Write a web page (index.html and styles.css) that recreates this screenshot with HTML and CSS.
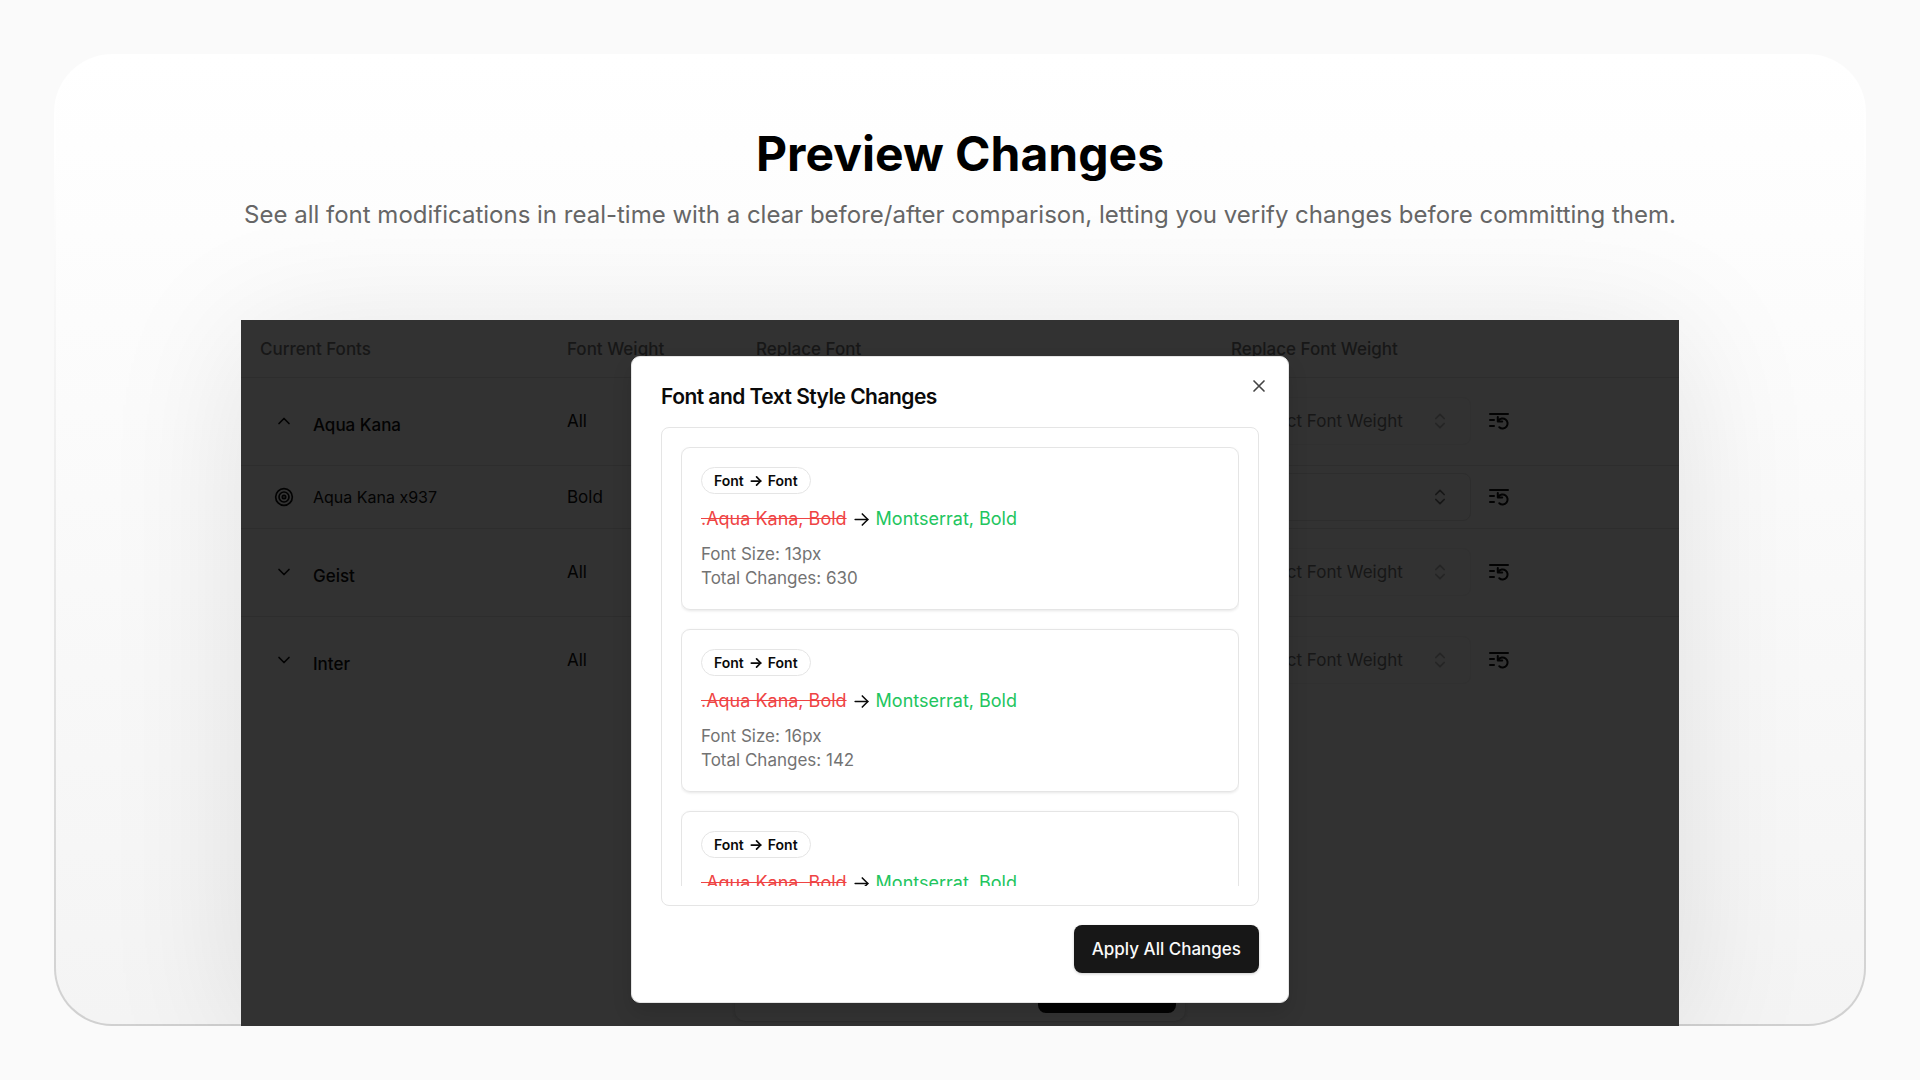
FILE: index.html
```html
<!DOCTYPE html>
<html lang="en">
<head>
<meta charset="utf-8">
<title>Preview Changes</title>
<link rel="stylesheet" href="styles.css">
</head>
<body>
<svg class="sprite" aria-hidden="true">
  <symbol id="chev-up" viewBox="0 0 24 24"><path d="m6 15 6-6 6 6"/></symbol>
  <symbol id="chev-down" viewBox="0 0 24 24"><path d="m6 9 6 6 6-6"/></symbol>
  <symbol id="sort" viewBox="0 0 24 24"><path d="m7 15 5 5 5-5"/><path d="m7 9 5-5 5 5"/></symbol>
  <symbol id="target" viewBox="0 0 24 24"><circle cx="12" cy="12" r="10"/><circle cx="12" cy="12" r="6"/><circle cx="12" cy="12" r="2"/></symbol>
  <symbol id="reset" viewBox="0 0 22 20"><path d="M2 3h18M2 9h4M2 15h4"/><path d="M10.500 9.600a5 5 0 1 1 .8 6.600"/><path d="M9.800 6v4.400h4.400"/></symbol>
  <symbol id="arrow" viewBox="0 0 24 24"><path d="M4 12h16"/><path d="m13 5 7 7-7 7"/></symbol>
  <symbol id="cross" viewBox="0 0 24 24"><path d="M6 6l12 12M18 6 6 18"/></symbol>
</svg>
<main class="card">
  <header class="intro">
    <h1 class="title">Preview Changes</h1>
    <p class="subtitle">See all font modifications in real-time with a clear before/after comparison, letting you verify changes before committing them.</p>
  </header>
  <section class="app">
    <table class="fonts">
      <colgroup><col class="c1"><col class="c2"><col class="c3"><col class="c4"><col></colgroup>
      <thead>
        <tr><th>Current Fonts</th><th>Font Weight</th><th>Replace Font</th><th>Replace Font Weight</th><th></th></tr>
      </thead>
      <tbody>
        <tr class="group">
          <td><div class="name"><svg class="ico"><use href="#chev-up"/></svg><strong>Aqua Kana</strong></div></td><td>All</td><td></td>
          <td><button class="select off" type="button">Select Font Weight<svg class="ico"><use href="#sort"/></svg></button></td>
          <td><button class="undo" type="button" aria-label="Reset"><svg class="reset"><use href="#reset"/></svg></button></td>
        </tr>
        <tr class="item">
          <td><div class="name"><svg class="ico"><use href="#target"/></svg>Aqua Kana x937</div></td><td>Bold</td><td></td>
          <td><button class="select" type="button" aria-label="Font weight"><svg class="ico"><use href="#sort"/></svg></button></td>
          <td><button class="undo" type="button" aria-label="Reset"><svg class="reset"><use href="#reset"/></svg></button></td>
        </tr>
        <tr class="group">
          <td><div class="name"><svg class="ico"><use href="#chev-down"/></svg><strong>Geist</strong></div></td><td>All</td><td></td>
          <td><button class="select off" type="button">Select Font Weight<svg class="ico"><use href="#sort"/></svg></button></td>
          <td><button class="undo" type="button" aria-label="Reset"><svg class="reset"><use href="#reset"/></svg></button></td>
        </tr>
        <tr class="group">
          <td><div class="name"><svg class="ico"><use href="#chev-down"/></svg><strong>Inter</strong></div></td><td>All</td><td></td>
          <td><button class="select off" type="button">Select Font Weight<svg class="ico"><use href="#sort"/></svg></button></td>
          <td><button class="undo" type="button" aria-label="Reset"><svg class="reset"><use href="#reset"/></svg></button></td>
        </tr>
      </tbody>
    </table>
    <div class="toolbar"><span class="toolbar-action"></span></div>
    <div class="dialog" role="dialog" aria-labelledby="dialog-title">
      <div class="dialog-head">
        <h2 class="dialog-title" id="dialog-title">Font and Text Style Changes</h2>
        <button class="close" type="button" aria-label="Close"><svg class="ico"><use href="#cross"/></svg></button>
      </div>
      <div class="scroll">
        <div class="list">
          <article class="change">
            <span class="badge">Font <svg class="arrow-s"><use href="#arrow"/></svg> Font</span>
            <p class="diff"><del>.Aqua Kana, Bold</del><svg class="arrow"><use href="#arrow"/></svg><ins>Montserrat, Bold</ins></p>
            <p class="meta">Font Size: 13px<br>Total Changes: 630</p>
          </article>
          <article class="change">
            <span class="badge">Font <svg class="arrow-s"><use href="#arrow"/></svg> Font</span>
            <p class="diff"><del>.Aqua Kana, Bold</del><svg class="arrow"><use href="#arrow"/></svg><ins>Montserrat, Bold</ins></p>
            <p class="meta">Font Size: 16px<br>Total Changes: 142</p>
          </article>
          <article class="change">
            <span class="badge">Font <svg class="arrow-s"><use href="#arrow"/></svg> Font</span>
            <p class="diff"><del>.Aqua Kana, Bold</del><svg class="arrow"><use href="#arrow"/></svg><ins>Montserrat, Bold</ins></p>
          </article>
        </div>
      </div>
      <button class="apply" type="button">Apply All Changes</button>
    </div>
  </section>
</main>
</body>
</html>
```
FILE: styles.css
```css
* { box-sizing: border-box; }
body {
  margin: 0;
  min-height: 100vh;
  padding: 54px;
  display: flex;
  background: #fafafa;
  font-family: Inter, "Liberation Sans", sans-serif;
  color: #000;
}
h1, h2, p { margin: 0; font-weight: inherit; }
button { font: inherit; color: inherit; background: none; border: 0; padding: 0; }
svg { fill: none; stroke: currentColor; stroke-width: 2; stroke-linecap: round; stroke-linejoin: round; display: block; flex: none; }
.sprite { display: none; }

.card {
  flex: 1;
  min-width: 0;
  display: flex;
  flex-direction: column;
  align-items: center;
  border: 2px solid transparent;
  border-radius: 58px;
  background:
    linear-gradient(#fff, #f4f4f4) padding-box,
    linear-gradient(#fff, #fff 10%, #d0d0d0) border-box;
  overflow: hidden;
  overflow: clip;
  overflow-clip-margin: border-box;
}
.intro { padding: 68px 40px 0; text-align: center; }
.title { font-size: 48px; line-height: 60px; font-weight: 700; }
.subtitle { margin-top: 15px; font-size: 24px; line-height: 32px; color: #666; }

.app {
  position: relative;
  flex: 1;
  width: 79.540%;
  margin: 89px 0 -2px;
  background: #323232;
  box-shadow: 0 16px 130px rgba(0, 0, 0, 0.1);
  font-size: 17px;
}
.fonts { width: 100%; border-collapse: collapse; table-layout: fixed; line-height: 24px; color: #030303; }
.c1 { width: 307px; }
.c2 { width: 189px; }
.c3 { width: 475px; }
.c4 { width: 257px; }
.fonts th { height: 57px; padding: 2px 19px 0; text-align: left; font-weight: 500; color: #171717; white-space: nowrap; }
.fonts tr { border-bottom: 1px solid #2d2d2d; }
.fonts tbody tr:last-child { border-bottom: 0; }
.fonts td { padding: 0 19px; }
.group { height: 88px; }
.item { height: 63px; }
.name { display: flex; align-items: center; gap: 19px; padding-left: 14px; font-size: 16px; }
.name strong { font-size: 17px; font-weight: 500; padding-top: 7px; }
.ico { width: 20px; height: 20px; }
.select { display: flex; align-items: center; justify-content: space-between; width: 240px; height: 48px; padding: 0 20px; border: 1px solid #2d2d2d; border-radius: 8px; color: #171717; white-space: nowrap; }
.select .ico { margin-left: auto; }
.off { border-color: #303030; }
.off .ico { color: #252525; }
.undo { display: block; }
.reset { width: 22px; height: 20px; }

.toolbar { position: absolute; left: 494px; right: 494px; bottom: 5px; height: 40px; display: flex; justify-content: flex-end; padding: 0 9px 8px; border-radius: 10px; background: #333; box-shadow: 0 1px 3px #2b2b2b; }
.toolbar-action { width: 138px; border-radius: 8px; background: #030303; }

.dialog {
  position: absolute;
  top: 36px;
  left: 50%;
  width: 658px;
  margin-left: -329px;
  padding: 28px 29px 29px;
  display: flex;
  flex-direction: column;
  background: #fff;
  border: 1px solid #e5e5e5;
  border-radius: 9px;
  box-shadow: 0 10px 20px rgba(0, 0, 0, 0.12);
}
.dialog-head { display: flex; justify-content: space-between; }
.dialog-title { font-size: 21px; line-height: 24px; font-weight: 600; letter-spacing: -0.025em; color: #0a0a0a; }
.close { align-self: flex-start; margin: -9px -10px 0 0; color: #444; }
.scroll { margin-top: 18px; height: 479px; padding: 19px; border: 1px solid #e5e5e5; border-radius: 8px; }
.list { height: 439px; overflow: hidden; display: flex; flex-direction: column; gap: 19px; }
.change { flex: none; height: 163px; padding: 19px; border: 1px solid #e5e5e5; border-radius: 9px; box-shadow: 0 1px 3px rgba(0, 0, 0, 0.1); }
.badge { display: flex; width: fit-content; align-items: center; gap: 5px; height: 27px; padding: 0 12px; border: 1px solid #e5e5e5; border-radius: 14px; font-size: 14px; font-weight: 600; color: #0a0a0a; }
.diff { display: flex; align-items: center; gap: 5px; margin-top: 11px; font-size: 18px; line-height: 28px; color: #0a0a0a; }
.diff del { color: #ef4444; }
.diff ins { color: #22c55e; text-decoration: none; }
.arrow { width: 19px; height: 19px; }
.arrow-s { width: 14px; height: 14px; stroke-width: 3; }
.meta { margin-top: 9px; font-size: 17px; line-height: 24px; color: #737373; }
.apply { align-self: flex-end; margin-top: 19px; height: 48px; padding: 0 18px; border-radius: 8px; background: #171717; color: #fafafa; font-size: 17px; font-weight: 500; box-shadow: 0 1px 3px rgba(0, 0, 0, 0.2); }
```
